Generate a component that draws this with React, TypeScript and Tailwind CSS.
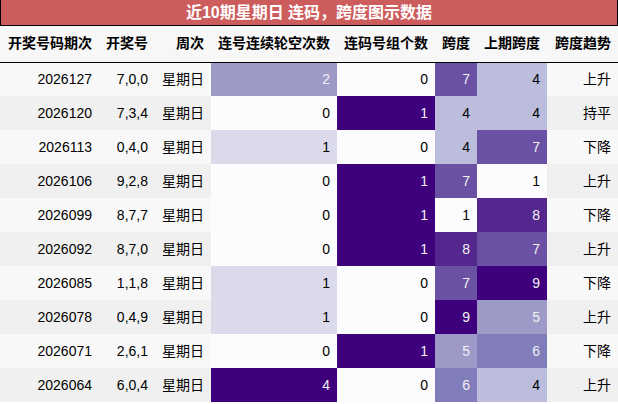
import React from "react";

const P = (v: number) => {
  const stops = ["#fcfbfd", "#efedf5", "#dadaeb", "#bcbddc", "#9e9ac8", "#807dba", "#6a51a3", "#54278f", "#3f007d"];
  const i = Math.round(v * 8);
  return stops[Math.max(0, Math.min(8, i))];
};
const dark = (v: number) => v >= 0.5;

type Row = [string, string, number, number, number, number, string];
const rows: Row[] = [
  ["2026127", "7,0,0", 2, 0, 7, 4, "上升"],
  ["2026120", "7,3,4", 0, 1, 4, 4, "持平"],
  ["2026113", "0,4,0", 1, 0, 4, 7, "下降"],
  ["2026106", "9,2,8", 0, 1, 7, 1, "上升"],
  ["2026099", "8,7,7", 0, 1, 1, 8, "下降"],
  ["2026092", "8,7,0", 0, 1, 8, 7, "上升"],
  ["2026085", "1,1,8", 1, 0, 7, 9, "下降"],
  ["2026078", "0,4,9", 1, 0, 9, 5, "上升"],
  ["2026071", "2,6,1", 0, 1, 5, 6, "下降"],
  ["2026064", "6,0,4", 4, 0, 6, 4, "上升"],
];

const headers = ["开奖号码期次", "开奖号", "周次", "连号连续轮空次数", "连码号组个数", "跨度", "上期跨度", "跨度趋势"];
const widths = [99, 56, 56, 126, 98, 42, 70, 71];

function GradCell({ value, norm }: { value: number; norm: number }) {
  return (
    <td
      className="px-[7px] text-right"
      style={{ backgroundColor: P(norm), color: dark(norm) ? "#f1f1f1" : "#000000" }}
    >
      {value}
    </td>
  );
}

export default function App() {
  return (
    <div
      className="w-[618px] h-[404px] overflow-hidden bg-white text-[14px] text-black"
      style={{ fontFamily: '"Liberation Sans", "Noto Sans CJK SC", sans-serif' }}
    >
      <div className="h-[26px] bg-[#cd5c5c] border-x border-b border-black flex items-center justify-center text-white font-bold text-[16px] leading-none">
        近10期星期日 连码，跨度图示数据
      </div>
      <table className="table-fixed border-collapse w-[618px]">
        <colgroup>
          {widths.map((w, i) => (
            <col key={i} style={{ width: w }} />
          ))}
        </colgroup>
        <thead>
          <tr className="h-[36px] bg-[#f7f7f7] border-b border-black">
            {headers.map((h, i) => (
              <th key={i} className="px-[7px] text-right font-bold whitespace-nowrap">
                {h}
              </th>
            ))}
          </tr>
        </thead>
        <tbody>
          {rows.map((r, i) => (
            <tr key={i} className={i % 2 === 0 ? "h-[34px] bg-[#f8f8f8]" : "h-[34px] bg-[#f0f0f0]"}>
              <td className="px-[7px] text-right">{r[0]}</td>
              <td className="px-[7px] text-right">{r[1]}</td>
              <td className="px-[7px] text-right">星期日</td>
              <GradCell value={r[2]} norm={r[2] / 4} />
              <GradCell value={r[3]} norm={r[3]} />
              <GradCell value={r[4]} norm={(r[4] - 1) / 8} />
              <GradCell value={r[5]} norm={(r[5] - 1) / 8} />
              <td className="px-[7px] text-right">{r[6]}</td>
            </tr>
          ))}
        </tbody>
      </table>
    </div>
  );
}
